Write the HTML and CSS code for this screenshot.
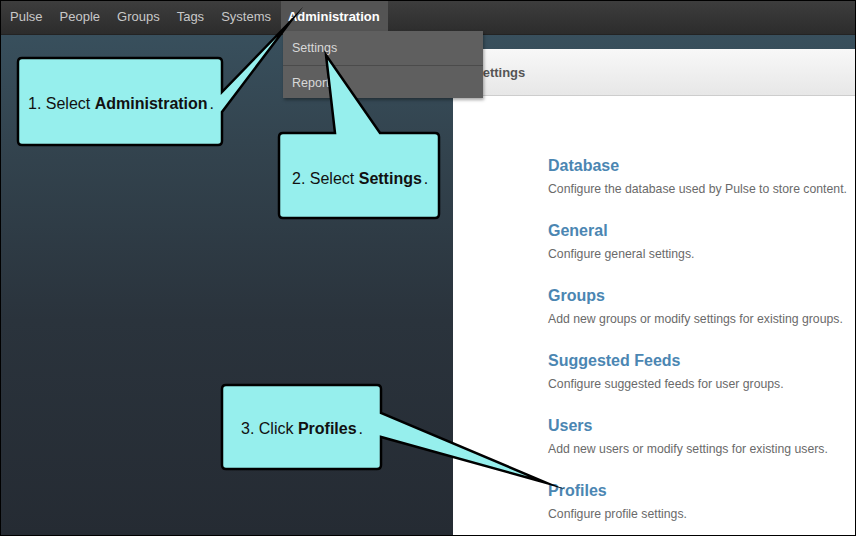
FILE: index.html
```html
<!DOCTYPE html>
<html lang="en">
<head>
<meta charset="utf-8">
<title>Pulse – Settings</title>
<link rel="stylesheet" href="styles.css">
</head>
<body>
<div class="frame">
  <header class="topnav">
    <ul class="nav-list">
      <li class="nav-item">Pulse</li>
      <li class="nav-item">People</li>
      <li class="nav-item">Groups</li>
      <li class="nav-item">Tags</li>
      <li class="nav-item">Systems</li>
      <li class="nav-item active">Administration</li>
    </ul>
  </header>

  <ul class="dropdown">
    <li class="dropdown-item">Settings</li>
    <li class="dropdown-item">Reports</li>
  </ul>

  <main class="stage">
    <section class="panel">
      <div class="panel-header">Settings</div>
      <ul class="settings-list">
        <li class="setting"><span class="setting-title">Database</span><span class="setting-desc">Configure the database used by Pulse to store content.</span></li>
        <li class="setting"><span class="setting-title">General</span><span class="setting-desc">Configure general settings.</span></li>
        <li class="setting"><span class="setting-title">Groups</span><span class="setting-desc">Add new groups or modify settings for existing groups.</span></li>
        <li class="setting"><span class="setting-title">Suggested Feeds</span><span class="setting-desc">Configure suggested feeds for user groups.</span></li>
        <li class="setting"><span class="setting-title">Users</span><span class="setting-desc">Add new users or modify settings for existing users.</span></li>
        <li class="setting"><span class="setting-title">Profiles</span><span class="setting-desc">Configure profile settings.</span></li>
      </ul>
    </section>
  </main>

  <div class="annotations">
    <svg class="callout-shapes" width="856" height="536" viewBox="0 0 856 536" xmlns="http://www.w3.org/2000/svg">
      <path class="callout-shape" d="M22,58 H218 Q222,58 222,62 V92 L290,22 L222,112 V141 Q222,145 218,145 H22 Q18,145 18,141 V62 Q18,58 22,58 Z"/>
      <path class="callout-shape" d="M283,133 H335 L326,55 L380,133 H435 Q439,133 439,137 V214 Q439,218 435,218 H283 Q279,218 279,214 V137 Q279,133 283,133 Z"/>
      <path class="callout-shape" d="M226,385 H377 Q381,385 381,389 V413 L547,483 L381,437 V465 Q381,469 377,469 H226 Q222,469 222,465 V389 Q222,385 226,385 Z"/>
    </svg>
    <p class="callout-text c1">1. Select <b>Administration</b><span class="stop">.</span></p>
    <p class="callout-text c2">2. Select <b>Settings</b><span class="stop">.</span></p>
    <p class="callout-text c3">3. Click <b>Profiles</b><span class="stop">.</span></p>
  </div>
</div>
</body>
</html>
```

FILE: styles.css
```css
* { box-sizing: border-box; }

html, body {
  margin: 0;
  padding: 0;
  background: #ffffff;
}

body {
  font-family: "Liberation Sans", Arial, sans-serif;
}

ul { list-style: none; margin: 0; padding: 0; }

.frame {
  position: relative;
  width: 856px;
  height: 536px;
  border: 1px solid #000;
  display: flex;
  flex-direction: column;
  overflow: hidden;
  background: linear-gradient(#3a5361 0px, #33444f 140px, #2a333c 320px, #252b33 100%);
}

/* top navigation */
.topnav {
  height: 34px;
  flex: none;
  background: linear-gradient(#3d3d3d, #2c2c2c);
  border-bottom: 1px solid #232323;
  padding-left: 2px;
}

.nav-list {
  display: flex;
  gap: 3px;
  align-items: flex-start;
}

.nav-item {
  height: 30px;
  padding: 1px 7px 0;
  line-height: 29px;
  font-size: 13px;
  color: #c8c8c8;
}

.nav-item.active {
  background: #545454;
  color: #ffffff;
  font-weight: bold;
  padding: 1px 8px 0 7px;
}

/* dropdown menu */
.dropdown {
  position: absolute;
  left: 282px;
  top: 30px;
  width: 200px;
  background: #5f5f5f;
  box-shadow: 1px 2px 3px rgba(0, 0, 0, 0.35);
  z-index: 2;
}

.dropdown-item {
  height: 34px;
  padding: 1px 0 0 9px;
  line-height: 33px;
  font-size: 12.5px;
  color: #d8d8d8;
}

.dropdown-item + .dropdown-item {
  height: 33px;
  line-height: 32px;
  border-top: 1px solid #4b4b4b;
}

/* main area */
.stage {
  flex: 1;
  display: flex;
  justify-content: flex-end;
  padding-top: 14px;
}

.panel {
  width: 402px;
  background: #ffffff;
  display: flex;
  flex-direction: column;
}

.panel-header {
  height: 47px;
  flex: none;
  background: linear-gradient(#f8f8f8, #e7e7e7);
  border-bottom: 1px solid #cdcdcd;
  padding: 2px 0 0 21px;
  line-height: 44px;
  font-size: 13px;
  font-weight: bold;
  color: #555555;
}

.settings-list {
  padding: 60px 0 0 95px;
  display: flex;
  flex-direction: column;
  gap: 24px;
}

.setting {
  display: flex;
  flex-direction: column;
  gap: 5px;
}

.setting-title {
  font-size: 16px;
  line-height: 20px;
  font-weight: bold;
  color: #4b86b2;
}

.setting-desc {
  font-size: 12.25px;
  line-height: 16px;
  color: #6a6a6a;
}

/* annotation overlay */
.annotations {
  position: absolute;
  left: -1px;
  top: -1px;
  width: 856px;
  height: 536px;
  z-index: 5;
  pointer-events: none;
}

.callout-shapes {
  display: block;
}

.callout-shape {
  fill: #96efed;
  stroke: #000000;
  stroke-width: 2.5;
  stroke-linejoin: miter;
  stroke-miterlimit: 30;
}

.callout-text {
  position: absolute;
  margin: 0;
  font-size: 16px;
  line-height: 18px;
  color: #111111;
  white-space: nowrap;
}

.callout-text b { font-weight: bold; }

.callout-text .stop { margin-left: 2px; }

.c1 { left: 28px; top: 95px; }
.c2 { left: 292px; top: 170px; }
.c3 { left: 241px; top: 420px; }
```
